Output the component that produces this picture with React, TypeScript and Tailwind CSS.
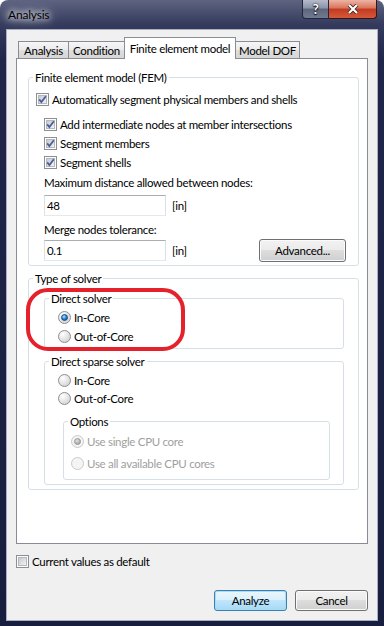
import React from "react";

const CheckBox = ({ checked = false }: { checked?: boolean }) => (
  <svg width="13" height="13" viewBox="0 0 13 13" className="shrink-0">
    <defs>
      <linearGradient id="cbFill" x1="0" y1="0" x2="1" y2="1">
        <stop offset="0" stopColor="#c3c8cf" />
        <stop offset="1" stopColor="#f5f5f5" />
      </linearGradient>
    </defs>
    <rect x="0.5" y="0.5" width="12" height="12" fill="#fdfdfd" stroke="#8e8f8f" />
    <rect x="2.5" y="2.5" width="8" height="8" fill="url(#cbFill)" stroke="#b4b8be" />
    {checked && (
      <path d="M3.2 6.4 L5.4 9 L9.8 3.2" fill="none" stroke="#4a5f97" strokeWidth="1.8" />
    )}
  </svg>
);

const Radio = ({ checked = false, disabled = false }: { checked?: boolean; disabled?: boolean }) => (
  <svg width="13" height="13" viewBox="0 0 13 13" className="shrink-0">
    <defs>
      <radialGradient id="rFill" cx="0.35" cy="0.3" r="0.8">
        <stop offset="0" stopColor="#ffffff" />
        <stop offset="1" stopColor="#cfd0d2" />
      </radialGradient>
      <radialGradient id="rDot" cx="0.4" cy="0.35" r="0.7">
        <stop offset="0" stopColor="#b5e3ff" />
        <stop offset="0.5" stopColor="#2a8ddf" />
        <stop offset="1" stopColor="#0b4f9a" />
      </radialGradient>
      <radialGradient id="rDotOff" cx="0.4" cy="0.35" r="0.7">
        <stop offset="0" stopColor="#e2e2e2" />
        <stop offset="1" stopColor="#9c9c9c" />
      </radialGradient>
    </defs>
    <circle cx="6.5" cy="6.5" r="6" fill={disabled ? "#f4f4f4" : "url(#rFill)"} stroke={disabled ? "#c9c9c9" : "#8e8f8f"} />
    {checked && (
      <circle cx="6.5" cy="6.5" r="3" fill={disabled ? "url(#rDotOff)" : "url(#rDot)"} stroke={disabled ? "#8f8f8f" : "#1a3d6e"} strokeWidth="0.8" />
    )}
  </svg>
);

const Row = ({ children, className = "" }: { children: React.ReactNode; className?: string }) => (
  <div className={"flex h-[18px] items-center gap-[3px] whitespace-nowrap " + className}>{children}</div>
);

const Group = ({ title, className = "", children }: { title: string; className?: string; children: React.ReactNode }) => (
  <fieldset className={"rounded-[3px] border border-[#d5dfe5] " + className}>
    <legend className="ml-[4px] px-[2px] leading-[15px]">{title}</legend>
    {children}
  </fieldset>
);

const TextBox = ({ value }: { value: string }) => (
  <div className="flex h-[21px] w-[122px] items-center border border-[#abadb3] border-b-[#e3e9ef] border-l-[#dbdfe6] border-r-[#dbdfe6] bg-white pl-[2px]">
    {value}
  </div>
);

const tabOff =
  "flex h-[17px] items-center justify-center whitespace-nowrap border-t border-[#898c95] bg-[linear-gradient(180deg,#f6f6f6_0%,#ebebeb_50%,#dedede_51%,#d6d6d6_100%)] pt-[1px]";

const btnNormal =
  "flex items-center justify-center rounded-[3px] border border-[#707070] bg-[linear-gradient(180deg,#f2f2f2_0%,#ebebeb_49%,#dddddd_50%,#cfcfcf_100%)] shadow-[inset_0_0_0_1px_#fbfbfb]";

export default function App() {
  return (
    <div className="relative h-[626px] w-[384px] overflow-hidden bg-white text-[11.5px] leading-[15px] tracking-[-0.3px] text-black [font-family:Lato,sans-serif]">
      <div className="flex h-full flex-col rounded-t-[8px] bg-[linear-gradient(180deg,#5d6380_0px,#353b5d_24px,#20264a_60px,#181e3e_100%)] px-[6px] pb-[5px]">
        {/* title bar */}
        <div className="flex h-[29px] items-start justify-between">
          <div className="ml-[2px] mt-[7px] text-[12px] tracking-[-0.2px] [text-shadow:0_0_6px_#fff,0_0_10px_#fff,0_0_16px_rgba(255,255,255,0.8)]">
            Analysis
          </div>
          <div className="mr-[1px] flex">
            <div className="flex h-[19px] w-[27px] items-center justify-center rounded-bl-[4px] border border-t-0 border-[#22273c] bg-[linear-gradient(180deg,#b4bbcb_0%,#8a93a8_45%,#5c657c_50%,#707a91_100%)] text-[13px] font-bold text-white [text-shadow:0_0_2px_#000,0_1px_1px_#000]">
              ?
            </div>
            <div className="flex h-[19px] w-[48px] items-center justify-center rounded-br-[4px] border border-l-0 border-t-0 border-[#3b1510] bg-[linear-gradient(180deg,#eeb4a4_0%,#d8745c_45%,#c23a1f_50%,#d5593b_100%)]">
              <svg width="12" height="10" viewBox="0 0 12 10">
                <path d="M2 1 L10 9 M10 1 L2 9" stroke="#3b2522" strokeWidth="3.8" />
                <path d="M2 1 L10 9 M10 1 L2 9" stroke="#ffffff" strokeWidth="2.2" />
              </svg>
            </div>
          </div>
        </div>

        {/* client area */}
        <div className="flex flex-1 flex-col border border-[#a9afc3] bg-[#f0f0f0]">
          {/* tabs */}
          <div className="ml-[11px] mt-[7px] flex h-[21px] items-end">
            <div className={"w-[51px] border-l border-r " + tabOff}>Analysis</div>
            <div className={"w-[55px] " + tabOff}>Condition</div>
            <div className="relative z-10 -mb-px flex h-[22px] w-[112px] items-center justify-center whitespace-nowrap border border-b-0 border-[#898c95] bg-white pb-[1px]">
              Finite element model
            </div>
            <div className={"w-[64px] border-r " + tabOff}>Model DOF</div>
          </div>

          {/* tab page */}
          <div className="ml-[9px] h-[486px] w-[352px] border border-[#898c95] bg-white">
            <Group title="Finite element model (FEM)" className="ml-[11px] mt-[11px] w-[331px]">
              <div className="pb-[3px] pl-[7px] pr-[12px] pt-[5px]">
                <Row>
                  <CheckBox checked />
                  <span>Automatically segment physical members and shells</span>
                </Row>
                <div className="pl-[8px]">
                  <div className="mt-[7px] flex flex-col gap-[1px]">
                    <Row>
                      <CheckBox checked />
                      <span>Add intermediate nodes at member intersections</span>
                    </Row>
                    <Row>
                      <CheckBox checked />
                      <span>Segment members</span>
                    </Row>
                    <Row>
                      <CheckBox checked />
                      <span>Segment shells</span>
                    </Row>
                  </div>
                  <Row className="mt-[2px]">Maximum distance allowed between nodes:</Row>
                  <div className="mt-[4px] flex h-[21px] items-center">
                    <TextBox value="48" />
                    <span className="ml-[6px]">[in]</span>
                  </div>
                  <Row className="mt-[4px]">Merge nodes tolerance:</Row>
                  <div className="mt-[1px] flex h-[23px] items-center">
                    <TextBox value="0.1" />
                    <span className="ml-[6px]">[in]</span>
                    <div className={"ml-auto h-[23px] w-[87px] " + btnNormal}>Advanced...</div>
                  </div>
                </div>
              </div>
            </Group>

            <Group title="Type of solver" className="ml-[11px] mt-[5px] w-[331px]">
              <div className="pb-[4px] pl-[15px] pt-[5px]">
                <Group title="Direct solver" className="w-[300px]">
                  <div className="flex flex-col gap-[1px] pb-[3px] pl-[13px] pt-[2px]">
                    <Row>
                      <Radio checked />
                      <span>In-Core</span>
                    </Row>
                    <Row>
                      <Radio />
                      <span>Out-of-Core</span>
                    </Row>
                  </div>
                </Group>
                <Group title="Direct sparse solver" className="mt-[5px] w-[300px]">
                  <div className="pb-[4px] pl-[13px] pt-[2px]">
                    <Row>
                      <Radio />
                      <span>In-Core</span>
                    </Row>
                    <Row>
                      <Radio />
                      <span>Out-of-Core</span>
                    </Row>
                    <Group title="Options" className="ml-[5px] mt-[7px] w-[267px]">
                      <div className="pb-[7px] pl-[7px] pt-[3px] text-[#a0a0a0]">
                        <Row>
                          <Radio checked disabled />
                          <span>Use single CPU core</span>
                        </Row>
                        <Row className="mt-[4px]">
                          <Radio disabled />
                          <span>Use all available CPU cores</span>
                        </Row>
                      </div>
                    </Group>
                  </div>
                </Group>
              </div>
            </Group>
          </div>

          <Row className="ml-[9px] mt-[8px]">
            <CheckBox />
            <span>Current values as default</span>
          </Row>

          <div className="mr-[9px] mt-[20px] flex justify-end gap-[8px]">
            <div className="flex h-[21px] w-[73px] items-center justify-center rounded-[3px] border border-[#3c7fb1] bg-[linear-gradient(180deg,#eaf6fd_0%,#d9f0fc_49%,#bee6fd_50%,#a7d9f5_100%)] shadow-[inset_0_0_0_1px_#a9ddf6]">
              Analyze
            </div>
            <div className={"h-[21px] w-[73px] " + btnNormal}>Cancel</div>
          </div>
        </div>
      </div>

      {/* red annotation drawn over the screenshot */}
      <div className="pointer-events-none absolute left-[26px] top-[288px] h-[63px] w-[159px] rounded-[22px] border-[4px] border-[#e5222c]" />
    </div>
  );
}
